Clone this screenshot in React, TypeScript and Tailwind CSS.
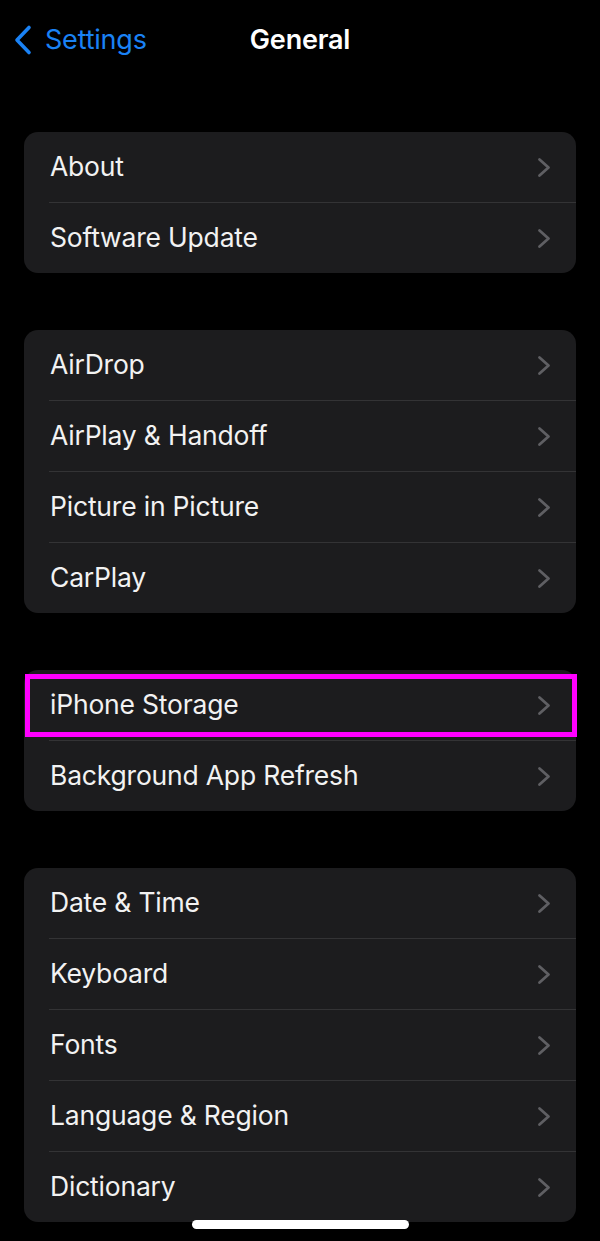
const groups = [
  ['About', 'Software Update'],
  ['AirDrop', 'AirPlay & Handoff', 'Picture in Picture', 'CarPlay'],
  ['iPhone Storage', 'Background App Refresh'],
  ['Date & Time', 'Keyboard', 'Fonts', 'Language & Region', 'Dictionary'],
];

const highlighted = 'iPhone Storage';

const Chevron = () => (
  <svg width="15" height="21" viewBox="0 0 15 21" fill="none" className="text-[#5f5f63]">
    <path d="M2.5 2.5 L11.5 10.5 L2.5 18.5" stroke="currentColor" strokeWidth="2.8" strokeLinecap="round" strokeLinejoin="round" />
  </svg>
);

const Row = ({ label, first }: { label: string; first: boolean }) => (
  <div className="relative">
    {!first && <div className="ml-[25px] h-px bg-[#333335]" />}
    <div className="flex h-[70px] items-center justify-between pl-[26px] pr-[24px]">
      <span className="text-[26.5px] tracking-[-0.2px] text-[#f2f2f2]">{label}</span>
      <Chevron />
    </div>
    {label === highlighted && (
      <div className="pointer-events-none absolute top-[4px] bottom-[3px] left-px -right-px border-[5px] border-[#ff00ff]" />
    )}
  </div>
);

export default function App() {
  return (
    <div
      className="relative min-h-[1241px] w-[600px] overflow-hidden bg-black"
      style={{ fontFamily: 'Inter, "Noto Sans", sans-serif' }}
    >
      <header className="grid h-[80px] grid-cols-[1fr_auto_1fr] items-center">
        <div className="flex items-center pl-[12px] text-[#1a82f5]">
          <svg width="22" height="32" viewBox="0 0 22 32" fill="none">
            <path d="M17 3.5 L5 16 L17 28.5" stroke="currentColor" strokeWidth="3.6" strokeLinecap="round" strokeLinejoin="round" />
          </svg>
          <span className="ml-[11px] text-[27px] tracking-[-0.2px]">Settings</span>
        </div>
        <h1 className="text-[27px] font-semibold tracking-[-0.2px] text-white">General</h1>
        <div />
      </header>

      <main className="flex flex-col gap-[57px] px-[24px] pt-[52px]">
        {groups.map((items, i) => (
          <section key={i} className="rounded-[14px] bg-[#1c1c1e]">
            {items.map((label, j) => (
              <Row key={label} label={label} first={j === 0} />
            ))}
          </section>
        ))}
      </main>

      <div className="absolute left-[192px] top-[1220px] h-[9px] w-[217px] rounded-full bg-white" />
    </div>
  );
}
